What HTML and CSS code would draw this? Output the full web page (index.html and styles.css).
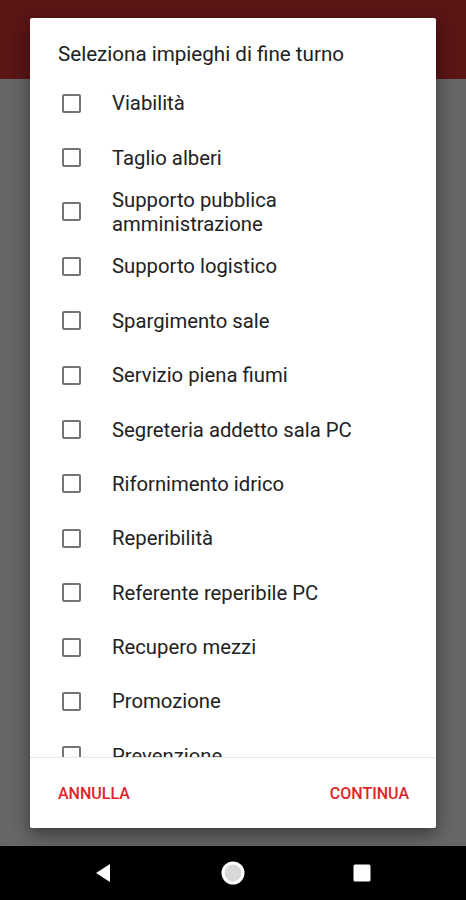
FILE: index.html
```html
<!DOCTYPE html>
<html lang="it">
<head>
    <meta charset="UTF-8">
    <title>Impieghi di fine turno</title>
    <link rel="stylesheet" href="styles.css">
</head>
<body>

<div class="screen">
    <div class="app-bar"></div>
    <div class="app-content"></div>
    <div class="nav-bar">
        <svg class="nav-icon" width="20" height="20" viewBox="0 0 20 20">
            <path d="M17 1 L3 10 L17 19 Z" fill="#fff"/>
        </svg>
        <svg class="nav-icon" width="26" height="26" viewBox="0 0 26 26">
            <circle cx="13" cy="13" r="10" fill="#d9d9d9" stroke="#fff" stroke-width="3"/>
        </svg>
        <svg class="nav-icon" width="20" height="20" viewBox="0 0 20 20">
            <rect x="1.5" y="1.5" width="17" height="17" rx="1.5" fill="#fff"/>
        </svg>
    </div>
</div>

<div class="dialog">
    <h2 class="dialog-title">Seleziona impieghi di fine turno</h2>
    <div class="dialog-list">
        <label class="item"><span class="box"></span><span class="label">Viabilità</span></label>
        <label class="item"><span class="box"></span><span class="label">Taglio alberi</span></label>
        <label class="item"><span class="box"></span><span class="label">Supporto pubblica<br>amministrazione</span></label>
        <label class="item"><span class="box"></span><span class="label">Supporto logistico</span></label>
        <label class="item"><span class="box"></span><span class="label">Spargimento sale</span></label>
        <label class="item"><span class="box"></span><span class="label">Servizio piena fiumi</span></label>
        <label class="item"><span class="box"></span><span class="label">Segreteria addetto sala PC</span></label>
        <label class="item"><span class="box"></span><span class="label">Rifornimento idrico</span></label>
        <label class="item"><span class="box"></span><span class="label">Reperibilità</span></label>
        <label class="item"><span class="box"></span><span class="label">Referente reperibile PC</span></label>
        <label class="item"><span class="box"></span><span class="label">Recupero mezzi</span></label>
        <label class="item"><span class="box"></span><span class="label">Promozione</span></label>
        <label class="item"><span class="box"></span><span class="label">Prevenzione</span></label>
    </div>
    <div class="dialog-actions">
        <button class="action">ANNULLA</button>
        <button class="action">CONTINUA</button>
    </div>
</div>

</body>
</html>
```

FILE: styles.css
```css
body {
    margin: 0;
    padding: 0;
    font-family: Roboto, "Noto Sans", sans-serif;
    background-color: #000;
}

.screen {
    display: flex;
    flex-direction: column;
    width: 466px;
    height: 900px;
}

.app-bar {
    height: 79px;
    background-color: #5a1515;
}

.app-content {
    flex: 1;
    background-color: #666666;
}

.nav-bar {
    height: 54px;
    background-color: #000;
    display: flex;
    align-items: center;
    justify-content: space-between;
    padding: 0 94px 0 93px;
}

.nav-icon {
    display: block;
}

.dialog {
    position: absolute;
    top: 18px;
    left: 30px;
    width: 406px;
    height: 810px;
    background-color: #fff;
    border-radius: 2px;
    box-shadow: 0 6px 18px rgba(0, 0, 0, 0.45);
    display: flex;
    flex-direction: column;
}

.dialog-title {
    margin: 0;
    padding: 24px 28px 10px 28px;
    height: 24px;
    font-size: 20.6px;
    font-weight: 400;
    line-height: 24px;
    color: #212121;
}

.dialog-list {
    height: 681px;
    overflow: hidden;
}

.item {
    display: flex;
    align-items: center;
    height: 54.4px;
    padding-left: 32px;
}

.box {
    width: 15px;
    height: 15px;
    border: 2px solid #747474;
    border-radius: 2px;
    flex-shrink: 0;
}

.label {
    margin-left: 31px;
    font-size: 20.3px;
    line-height: 24px;
    color: #222;
}

.dialog-actions {
    flex: 1;
    border-top: 1px solid #e6e6e6;
    display: flex;
    align-items: center;
    justify-content: space-between;
    padding: 0 27px 0 28px;
}

.action {
    background: none;
    border: none;
    padding: 0;
    font-family: Roboto, sans-serif;
    font-size: 16px;
    font-weight: 500;
    color: #e0242b;
}
```
